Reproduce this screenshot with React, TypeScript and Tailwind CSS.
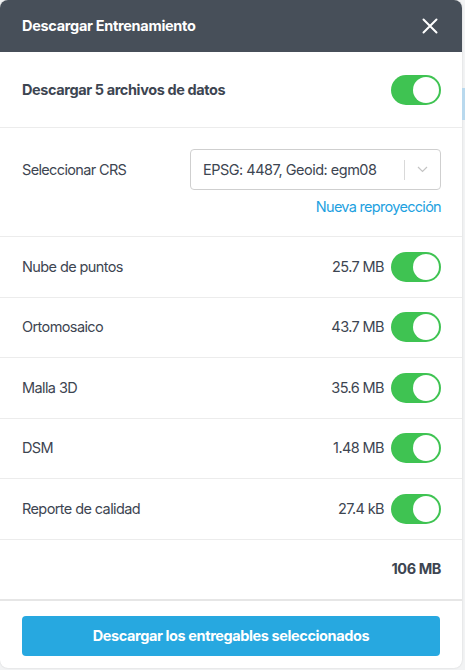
import React from "react";

function Toggle() {
  return (
    <div className="w-[50px] h-[30px] rounded-full bg-[#3fc352] flex items-center justify-end pr-[2px] shrink-0">
      <div className="w-[26px] h-[26px] rounded-full bg-white" />
    </div>
  );
}

const rows = [
  { name: "Nube de puntos", size: "25.7 MB" },
  { name: "Ortomosaico", size: "43.7 MB" },
  { name: "Malla 3D", size: "35.6 MB" },
  { name: "DSM", size: "1.48 MB" },
  { name: "Reporte de calidad", size: "27.4 kB" },
];

export default function App() {
  return (
    <div
      className="w-[465px] h-[670px] bg-[#f2f3f4] flex relative"
      style={{ fontFamily: "Inter, 'Noto Sans', sans-serif" }}
    >
      <div className="absolute right-0 top-[88px] w-[3px] h-[32px] bg-[#b9d9ee]" />
      <div className="w-[462px] h-[668px] bg-white rounded-[8px] flex flex-col overflow-hidden shadow-[0_0_2px_rgba(0,0,0,0.15)]">
        <div className="h-[52px] bg-[#474f59] flex items-center justify-between pl-[22px] pr-[24px] shrink-0">
          <span className="text-white text-[14.5px] font-bold tracking-[-0.3px]">Descargar Entrenamiento</span>
          <svg width="16" height="16" viewBox="0 0 16 16" fill="none">
            <path d="M1.5 1.5L14.5 14.5M14.5 1.5L1.5 14.5" stroke="white" strokeWidth="2" strokeLinecap="round" />
          </svg>
        </div>
        <div className="h-[76px] flex items-center justify-between pl-[22px] pr-[21px] border-b border-[#ececec] shrink-0">
          <span className="text-[#3d4551] text-[14.5px] font-bold tracking-[-0.4px]">Descargar 5 archivos de datos</span>
          <Toggle />
        </div>
        <div className="h-[109px] flex flex-col pl-[22px] pr-[21px] pt-[21px] border-b border-[#ececec] shrink-0">
          <div className="flex items-center justify-between">
            <span className="text-[#3d4551] text-[14.5px] tracking-[-0.65px]">Seleccionar CRS</span>
            <div className="w-[251px] h-[41px] border border-[#cfcfcf] rounded-[4px] flex items-center pl-[12px]">
              <span className="flex-1 text-[#3d4551] text-[14.5px] tracking-[-0.5px]">EPSG: 4487, Geoid: egm08</span>
              <div className="w-px h-[20px] bg-[#d9d9d9]" />
              <div className="w-[35px] flex items-center justify-center">
                <svg width="11" height="7" viewBox="0 0 11 7" fill="none">
                  <path d="M1 1L5.5 5.5L10 1" stroke="#c4c4c4" strokeWidth="1.2" />
                </svg>
              </div>
            </div>
          </div>
          <div className="flex justify-end mt-[6px]">
            <span className="text-[#1ea1df] text-[14.5px] tracking-[-0.7px]">Nueva reproyección</span>
          </div>
        </div>
        {rows.map((r) => (
          <div
            key={r.name}
            className="h-[60.5px] flex items-center justify-between pl-[22px] pr-[21px] border-b border-[#ececec] shrink-0"
          >
            <span className="text-[#3d4551] text-[14.5px] tracking-[-0.6px]">{r.name}</span>
            <div className="flex items-center gap-[7px]">
              <span className="text-[#3d4551] text-[14.5px] tracking-[-0.6px]">{r.size}</span>
              <Toggle />
            </div>
          </div>
        ))}
        <div className="h-[61px] flex items-center justify-end pr-[21px] border-b-2 border-[#e6e6e6] shrink-0">
          <span className="text-[#3d4551] text-[14.5px] font-bold tracking-[-0.4px]">106 MB</span>
        </div>
        <div className="flex-1 flex items-start pt-[15px] px-[22px]">
          <div className="w-full h-[40px] bg-[#27a8e0] rounded-[4px] flex items-center justify-center">
            <span className="text-white text-[14.5px] font-bold tracking-[-0.4px]">Descargar los entregables seleccionados</span>
          </div>
        </div>
      </div>
    </div>
  );
}
